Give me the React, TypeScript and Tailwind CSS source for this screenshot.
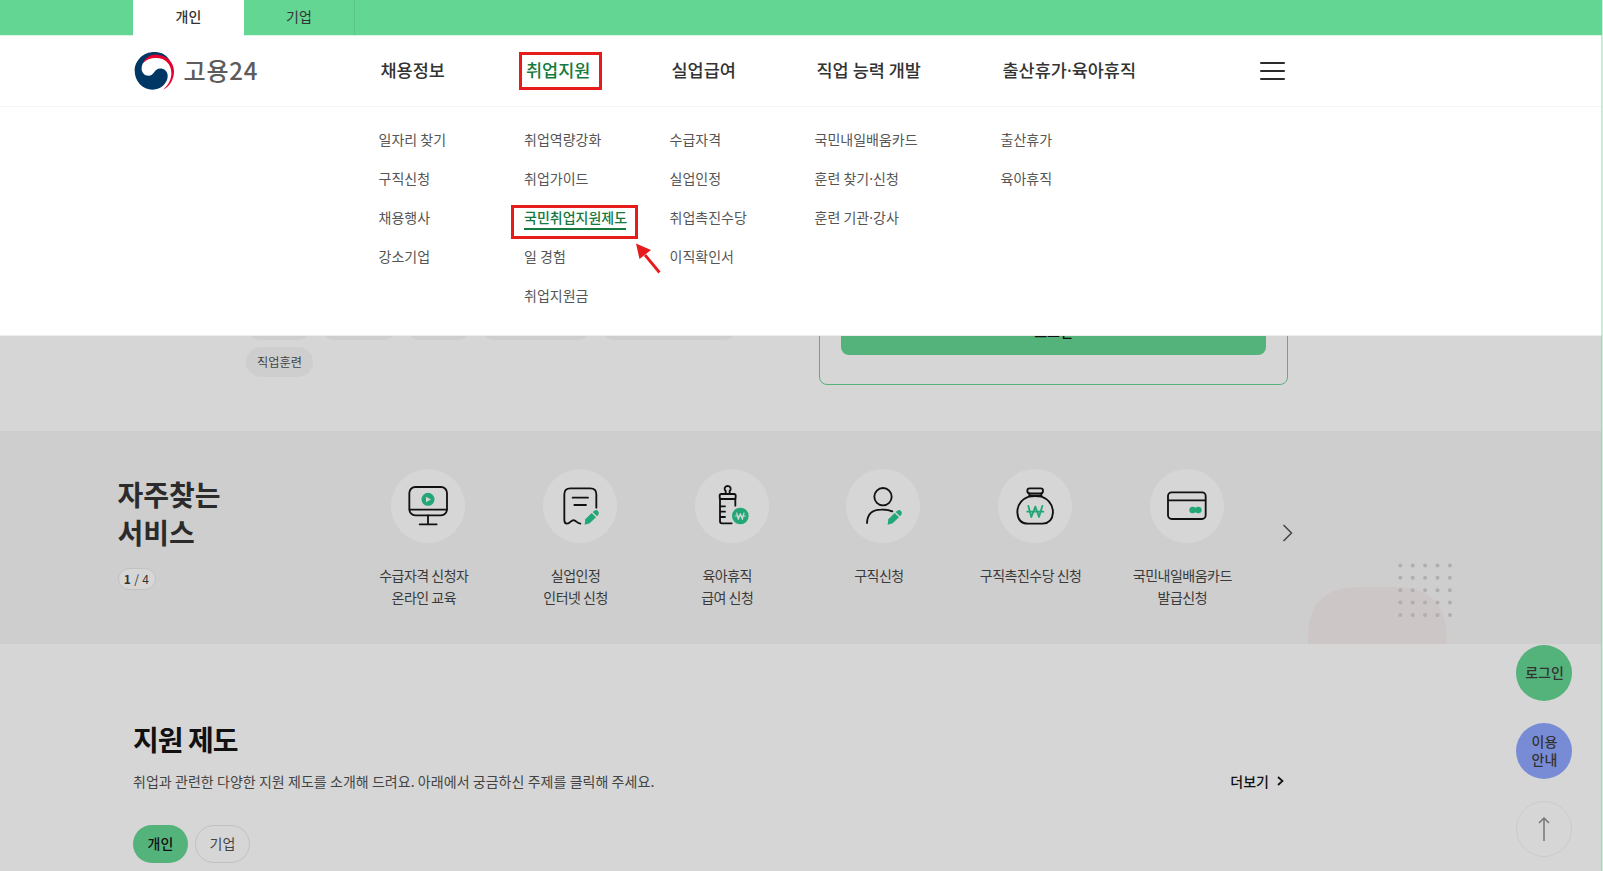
import React from 'react';

interface MenuColumn {
  title: string;
  items: string[];
  width: string;
}

interface Service {
  lines: string[];
  icon: React.ReactNode;
}

const menu: MenuColumn[] = [
  { title: '채용정보', items: ['일자리 찾기', '구직신청', '채용행사', '강소기업'], width: 'w-[145.5px]' },
  {
    title: '취업지원',
    items: ['취업역량강화', '취업가이드', '국민취업지원제도', '일 경험', '취업지원금'],
    width: 'w-[145.5px]',
  },
  { title: '실업급여', items: ['수급자격', '실업인정', '취업촉진수당', '이직확인서'], width: 'w-[145px]' },
  { title: '직업 능력 개발', items: ['국민내일배움카드', '훈련 찾기·신청', '훈련 기관·강사'], width: 'w-[186px]' },
  { title: '출산휴가·육아휴직', items: ['출산휴가', '육아휴직'], width: 'w-[260px]' },
];

const activeTitle = '취업지원';
const activeItem = '국민취업지원제도';

// the CJK middle dot is too wide, so it is set in the latin font
const Label = ({ text }: { text: string }) => (
  <>
    {text.split('·').map((part, index) => (
      <React.Fragment key={part}>
        {index > 0 && <span className="font-['Noto_Sans',sans-serif] leading-none">·</span>}
        {part}
      </React.Fragment>
    ))}
  </>
);

const Pencil = () => (
  <g fill="#22a776" stroke="none">
    <path d="M125 167 L127 151 L146 132 L159 145 L140 163 Z" strokeLinejoin="round" />
    <path d="M149 129 L154 125 Q160 121 165 126 Q170 131 166 137 L162 142 Z" />
  </g>
);

const services: Service[] = [
  {
    lines: ['수급자격 신청자', '온라인 교육'],
    icon: (
      <>
        <rect x="55" y="54" width="113" height="85" rx="18" />
        <path d="M56 122 H167 M111 139 V165 M86 166 H137" />
        <circle cx="111" cy="91" r="19.5" fill="#22a776" stroke="none" />
        <path d="M105 83 V100 L120 91.5 Z" fill="#d6d6d6" stroke="none" />
      </>
    ),
  },
  {
    lines: ['실업인정', '인터넷 신청'],
    icon: (
      <>
        <path d="M160 116 V76 Q160 58 142 58 H82 Q64 58 64 76 V153 Q64 164 72 164 Q77 164 83 158 Q92 150 100 158 Q106 163 112 164" />
        <path d="M89 86 H135 M94 108 H129" />
        <Pencil />
      </>
    ),
  },
  {
    lines: ['육아휴직', '급여 신청'],
    icon: (
      <>
        <path d="M92 74 V66 Q88 62 89 57 Q91 51 98 51 Q105 51 107 57 Q108 62 104 66 V74" />
        <rect x="74" y="75" width="48" height="15" rx="5" />
        <path d="M75 90 V157 Q75 163 81 163 H110 M121 90 V110 M76 112 H90 M76 128 H90 M76 144 H90" />
        <circle cx="136" cy="141" r="25" fill="#22a776" stroke="none" />
        <path d="M125 132 L130 151 L136 134 L142 151 L147 132 M121 141 H151" stroke="#d6d6d6" strokeWidth="3.5" />
      </>
    ),
  },
  {
    lines: ['구직신청'],
    icon: (
      <>
        <circle cx="111" cy="83" r="26" />
        <path d="M63 162 Q65 122 105 122 Q126 121 139 127" />
        <Pencil />
      </>
    ),
  },
  {
    lines: ['구직촉진수당 신청'],
    icon: (
      <>
        <rect x="88" y="58" width="47" height="15" rx="7" />
        <path d="M94 73 V82 M130 73 V82 M94 79 H130" />
        <path d="M92 83 Q58 96 58 130 Q60 164 90 164 H134 Q163 162 165 130 Q164 96 131 83 Q111 79 92 83 Z" />
        <path d="M91 111 L100 144 L112 113 L123 144 L133 111 M88 128 H136" stroke="#22a776" />
      </>
    ),
  },
  {
    lines: ['국민내일배움카드', '발급신청'],
    icon: (
      <>
        <rect x="54" y="70" width="113" height="80" rx="11" />
        <path d="M55 94 H166" />
        <circle cx="128" cy="123" r="10" fill="#22a776" stroke="none" />
        <circle cx="145" cy="123" r="10" fill="#22a776" stroke="none" />
      </>
    ),
  },
];

const chipWidths = ['w-[67px]', 'w-[78px]', 'w-[67px]', 'w-[113px]', 'w-[139px]'];

function Logo() {
  return (
    <div className="flex w-[244.5px] items-center pl-[1px]">
      <svg className="mb-[1px] h-[39px] w-[41px] shrink-0" viewBox="102 153 124 118">
        <path
          fill="#003764"
          d="M212 183 C196 158 176 156 163 156 C130 156 104 182 104 213 C104 245 128 270 158 270 C184 270 204 250 204 228 C204 214 193 206 181 206 C163 206 163 228 146 228 C133 228 125 218 125 206 C125 184 145 168 168 168 C186 168 202 176 212 183 Z"
        />
        <path
          fill="#e6002d"
          d="M128 192 C136 172 153 163 172 164 C203 166 223 188 223 215 C223 240 208 262 190 270 C204 258 216 240 215 218 C214 190 195 175 170 174 C150 173 136 181 128 192 Z"
        />
      </svg>
      <span className="relative top-[-1px] ml-[8.5px] text-[24px] leading-none font-medium tracking-[0.8px] text-[#5c5c5c]">
        고용24
      </span>
    </div>
  );
}

function Header() {
  return (
    <header className="h-[336px] border-b border-[#ececec] bg-white text-[#333]">
      <div className="flex h-[36px] border-b border-[#d8f5e4] bg-[#63d694] pl-[133px] text-[14px]">
        <div className="flex h-[36px] w-[111px] items-center justify-center bg-white pb-[4px] font-medium">개인</div>
        <div className="flex w-[111px] items-center justify-center border-r border-[#5cc68a] pb-[3px]">기업</div>
      </div>

      <div className="flex h-[71px] items-center border-b border-[#f4f4f4] pl-[133px]">
        <Logo />
        <nav className="flex w-[882.5px] pb-[2px] pl-[3px]">
          {menu.map((column) => (
            <div key={column.title} className={`${column.width} shrink-0`}>
              <span
                className={`relative inline-block text-[17.5px] leading-[26px] font-medium whitespace-nowrap ${
                  column.title === activeTitle ? 'text-[#147a3d]' : ''
                }`}
              >
                <Label text={column.title} />
                {column.title === activeTitle && (
                  <span className="absolute top-[-5px] left-[-7.5px] h-[38px] w-[83px] border-[3px] border-[#e61c1c]" />
                )}
              </span>
            </div>
          ))}
        </nav>
        <button className="flex w-[25px] flex-col gap-[6px]" aria-label="전체메뉴">
          <span className="h-[2px] w-full rounded bg-[#2b2b2b]" />
          <span className="h-[2px] w-full rounded bg-[#2b2b2b]" />
          <span className="h-[2px] w-full rounded bg-[#2b2b2b]" />
        </button>
      </div>

      <div className="flex pt-[13px] pl-[378.6px] text-[14px] text-[#555]">
        {menu.map((column) => (
          <ul key={column.title} className={`${column.width} shrink-0`}>
            {column.items.map((item) => (
              <li key={item} className="flex h-[38.9px] items-center whitespace-nowrap">
                {item === activeItem ? (
                  <span className="relative font-medium text-[#147a3d]">
                    {item}
                    <span className="absolute right-[1px] bottom-[-2px] left-0 h-[2px] bg-[#147a3d]" />
                    <span className="absolute top-[-2px] left-[-13px] h-[34px] w-[127px] border-[3px] border-[#e61c1c]" />
                    <svg className="absolute top-[36px] left-[112px] h-[32px] w-[27px]" viewBox="0 0 27 32">
                      <path d="M9 12 L23.5 29.5" stroke="#e61c1c" strokeWidth="2.8" />
                      <path d="M0 0.5 L15 7 L3.5 16 Z" fill="#e61c1c" />
                    </svg>
                  </span>
                ) : (
                  <span>
                    <Label text={item} />
                  </span>
                )}
              </li>
            ))}
          </ul>
        ))}
      </div>
    </header>
  );
}

function SearchAndLogin() {
  return (
    <section className="flex h-[95px] items-end justify-between overflow-hidden pr-[315px] pl-[246px]">
      <div className="flex flex-col gap-[7px] pb-[54px]">
        <div className="flex gap-[7px]">
          {chipWidths.map((width, index) => (
            <span key={index} className={`${width} h-[30px] rounded-full bg-[#cecece]`} />
          ))}
        </div>
        <span className="flex h-[30px] w-[67px] items-center justify-center rounded-full bg-[#cecece] text-[12.2px] text-[#444]">
          직업훈련
        </span>
      </div>
      <div className="mb-[46px] w-[469px] rounded-lg border border-[#54b27b] px-[21px] pt-[21px] pb-[29px]">
        <div className="flex h-[48px] items-start justify-center rounded-lg bg-[#54b27b] pt-[14px] text-[14px] leading-[20px] font-medium text-[#111]">
          로그인
        </div>
      </div>
    </section>
  );
}

function Decoration() {
  return (
    <svg className="absolute right-[147px] bottom-0 h-[90px] w-[150px]" viewBox="0 0 150 90">
      <path d="M2 90 V79 Q4 35 48 33 H94 Q138 35 140.5 79 V90 Z" fill="#ccc7c6" />
      {[0, 1, 2, 3, 4].map((row) =>
        [0, 1, 2, 3, 4].map((col) => (
          <circle key={`${row}-${col}`} cx={94.3 + col * 12.4} cy={11.4 + row * 12.4} r="2" fill="#b0aeae" />
        ))
      )}
    </svg>
  );
}

function FrequentServices() {
  return (
    <section className="relative flex h-[213px] bg-[#cecece]">
      <Decoration />
      <div className="w-[231px] pt-[44px] pl-[117.5px] whitespace-nowrap">
        <h2 className="text-[28px] leading-[38px] font-bold text-[#2b2b2b]">
          자주찾는
          <br />
          서비스
        </h2>
        <div className="mt-[17px] flex h-[22px] w-[38px] items-center justify-center rounded-full border border-[#c2c2c2] bg-[#d6d6d6] text-[12px] tracking-[0.3px] text-[#333]">
          <b className="font-bold">1</b>&nbsp;/&nbsp;4
        </div>
      </div>
      <ul className="flex pt-[37.5px] pl-[117px]">
        {services.map((service) => (
          <li key={service.lines[0]} className="flex w-[151.7px] flex-col items-center">
            <span className="ml-[9px] size-[74px] rounded-full bg-[#d6d6d6]">
              <svg
                viewBox="0 0 222 222"
                fill="none"
                stroke="#111"
                strokeWidth="5.5"
                strokeLinecap="round"
                strokeLinejoin="round"
              >
                {service.icon}
              </svg>
            </span>
            <p className="mt-[21.5px] text-center text-[14px] leading-[22px] tracking-[-0.5px] whitespace-nowrap text-[#3a3a3a]">
              {service.lines.map((line) => (
                <span key={line} className="block">
                  {line}
                </span>
              ))}
            </p>
          </li>
        ))}
      </ul>
      <svg className="mt-[93px] ml-[24px] h-[18px] w-[11px]" viewBox="0 0 11 18" fill="none" stroke="#444" strokeWidth="1.5">
        <path d="M1.5 1 L9.5 9 L1.5 17" />
      </svg>
    </section>
  );
}

function SupportPrograms() {
  return (
    <section className="h-[227px] pt-[75px] pl-[133px] whitespace-nowrap">
      <h2 className="text-[28px] leading-[40px] font-bold tracking-[-1px] text-[#111]">지원 제도</h2>
      <div className="mt-[12px] flex h-[20px] w-[1151px] items-center justify-between">
        <p className="text-[14px] tracking-[0.05px] text-[#444]">
          취업과 관련한 다양한 지원 제도를 소개해 드려요. 아래에서 궁금하신 주제를 클릭해 주세요.
        </p>
        <a className="flex items-center gap-[8px] text-[14px] font-medium text-[#111]">
          더보기
          <svg className="h-[10px] w-[7px]" viewBox="0 0 7 10" fill="none" stroke="#111" strokeWidth="1.7">
            <path d="M1 1 L5.5 5 L1 9" />
          </svg>
        </a>
      </div>
      <div className="mt-[34px] flex gap-[7px] text-[14px]">
        <button className="h-[38px] w-[55px] rounded-full bg-[#54b27b] pb-[1px] font-medium text-[#111]">개인</button>
        <button className="h-[38px] w-[55px] rounded-full border border-[#c2c2c2] pb-[1px] text-[#444]">기업</button>
      </div>
    </section>
  );
}

// quick links that float over the page on the right
function QuickLinks() {
  return (
    <aside className="absolute top-[645px] right-[31px] flex flex-col gap-[22px] text-center text-[14px] leading-[18px] font-medium text-[#333]">
      <a className="flex size-[56px] items-center justify-center rounded-full bg-[#54b27b] pb-[2px] pl-[1px]">로그인</a>
      <a className="flex size-[56px] items-center justify-center rounded-full bg-[#788cd6] pb-[2px] pl-[1px]">
        이용
        <br />
        안내
      </a>
      <a className="flex size-[56px] items-center justify-center rounded-full border border-[#cbcbcb]">
        <svg className="h-[24px] w-[12px]" viewBox="0 0 12 24" fill="none" stroke="#777" strokeWidth="1.5">
          <path d="M1 6 L6 1 L11 6 M6 1 V24" />
        </svg>
      </a>
    </aside>
  );
}

export default function App() {
  return (
    <div className="relative h-[871px] w-[1603px] overflow-hidden bg-[#d6d6d6] font-['Noto_Sans_CJK_KR','Noto_Sans',sans-serif]">
      <Header />
      <SearchAndLogin />
      <FrequentServices />
      <SupportPrograms />
      <QuickLinks />
      <div className="absolute top-0 right-0 flex h-full">
        <span className="w-px bg-[#63d694]/40" />
        <span className="w-px bg-[#c4f5d9]" />
      </div>
    </div>
  );
}
